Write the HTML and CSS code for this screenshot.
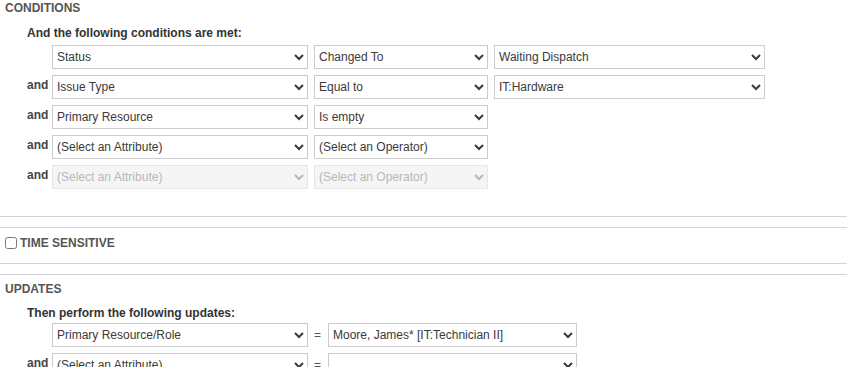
FILE: index.html
```html
<!DOCTYPE html>
<html lang="en">
<head>
    <meta charset="UTF-8">
    <title>Workflow Rule</title>
    <link rel="stylesheet" href="styles.css">
</head>
<body>
    <div class="section conditions">
        <h3 class="section-title">CONDITIONS</h3>
        <div class="section-body">
            <p class="lead">And the following conditions are met:</p>
            <div class="rule-row">
                <span class="joiner"></span>
                <select class="attr"><option>Status</option></select>
                <select class="op"><option>Changed To</option></select>
                <select class="val"><option>Waiting Dispatch</option></select>
            </div>
            <div class="rule-row">
                <span class="joiner">and</span>
                <select class="attr"><option>Issue Type</option></select>
                <select class="op"><option>Equal to</option></select>
                <select class="val"><option>IT:Hardware</option></select>
            </div>
            <div class="rule-row">
                <span class="joiner">and</span>
                <select class="attr"><option>Primary Resource</option></select>
                <select class="op"><option>Is empty</option></select>
            </div>
            <div class="rule-row">
                <span class="joiner">and</span>
                <select class="attr"><option>(Select an Attribute)</option></select>
                <select class="op"><option>(Select an Operator)</option></select>
            </div>
            <div class="rule-row">
                <span class="joiner">and</span>
                <select class="attr" disabled><option>(Select an Attribute)</option></select>
                <select class="op" disabled><option>(Select an Operator)</option></select>
            </div>
        </div>
    </div>

    <div class="section time">
        <label class="check-title"><input type="checkbox"> TIME SENSITIVE</label>
    </div>

    <div class="section updates">
        <h3 class="section-title">UPDATES</h3>
        <div class="section-body">
            <p class="lead">Then perform the following updates:</p>
            <div class="rule-row">
                <span class="joiner"></span>
                <select class="attr"><option>Primary Resource/Role</option></select>
                <span class="eq">=</span>
                <select class="upd"><option>Moore, James* [IT:Technician II]</option></select>
            </div>
            <div class="rule-row">
                <span class="joiner">and</span>
                <select class="attr"><option>(Select an Attribute)</option></select>
                <span class="eq">=</span>
                <select class="upd"><option></option></select>
            </div>
        </div>
    </div>
</body>
</html>
```

FILE: styles.css
```css
body {
    font-family: "Liberation Sans", Arial, sans-serif;
    font-size: 12px;
    color: #333;
    margin: 0;
    padding: 0;
    overflow: hidden;
}
.section {
    border-top: 1px solid #d3d3d3;
    border-bottom: 1px solid #d3d3d3;
    margin-bottom: 10px;
}
.conditions {
    border-top: none;
    padding-bottom: 21px;
}
.section-title {
    margin: 0;
    padding-left: 5px;
    font-size: 12px;
    line-height: 16px;
    font-weight: bold;
    color: #555;
}
.updates .section-title {
    margin-top: 6px;
}
.section-body {
    padding-left: 27px;
}
.lead {
    margin: 9px 0 4px;
    line-height: 16px;
    font-weight: bold;
    color: #333;
}
.updates .lead {
    margin: 8px 0 2px;
}
.rule-row {
    display: flex;
    align-items: center;
    height: 24px;
    margin-bottom: 6px;
}
.joiner {
    width: 25px;
    font-weight: bold;
    color: #444;
    align-self: flex-start;
    line-height: 20px;
}
select {
    height: 24px;
    border: 1px solid #ccc;
    border-radius: 0;
    background-color: #fff;
    font-family: "Liberation Sans", Arial, sans-serif;
    font-size: 12px;
    color: #3a3a3a;
    padding: 0;
    margin: 0 6px 0 0;
    box-sizing: border-box;
}
select:disabled {
    background-color: #f2f2f2;
    color: #999;
    border-color: #ddd;
}
.attr {
    width: 256px;
}
.op {
    width: 174px;
}
.val {
    width: 271px;
}
.upd {
    width: 249px;
}
.eq {
    width: 14px;
    margin-right: 0;
    color: #555;
}
.time {
    padding: 8px 0 13px 5px;
}
.check-title {
    display: flex;
    align-items: center;
    font-weight: bold;
    color: #555;
    line-height: 14px;
}
.check-title input {
    margin: 0 3px 0 0;
    width: 12px;
    height: 12px;
}
```
